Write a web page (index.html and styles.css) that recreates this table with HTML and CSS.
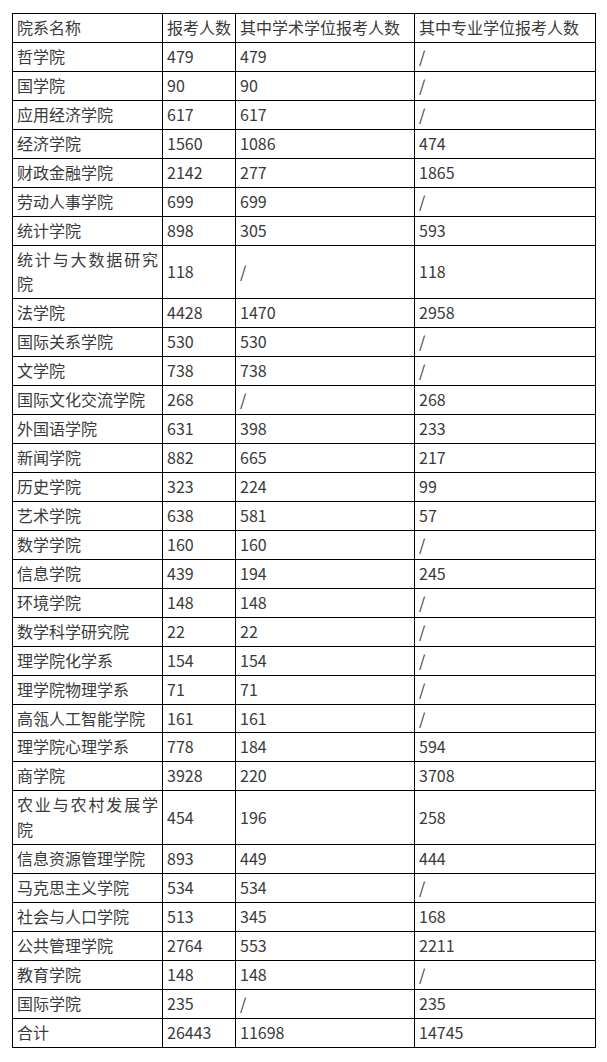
FILE: index.html
```html
<!DOCTYPE html>
<html lang="zh-CN">
<head>
<meta charset="utf-8">
<title>报考人数</title>
<link rel="stylesheet" href="styles.css">
</head>
<body>
<div class="page">
<table class="data">
<colgroup>
<col class="c1"><col class="c2"><col class="c3"><col class="c4">
</colgroup>
<tbody>
<tr><td>院系名称</td><td>报考人数</td><td>其中学术学位报考人数</td><td>其中专业学位报考人数</td></tr>
<tr><td>哲学院</td><td>479</td><td>479</td><td>/</td></tr>
<tr><td>国学院</td><td>90</td><td>90</td><td>/</td></tr>
<tr><td>应用经济学院</td><td>617</td><td>617</td><td>/</td></tr>
<tr><td>经济学院</td><td>1560</td><td>1086</td><td>474</td></tr>
<tr><td>财政金融学院</td><td>2142</td><td>277</td><td>1865</td></tr>
<tr><td>劳动人事学院</td><td>699</td><td>699</td><td>/</td></tr>
<tr><td>统计学院</td><td>898</td><td>305</td><td>593</td></tr>
<tr><td>统计与大数据研究院</td><td>118</td><td>/</td><td>118</td></tr>
<tr><td>法学院</td><td>4428</td><td>1470</td><td>2958</td></tr>
<tr><td>国际关系学院</td><td>530</td><td>530</td><td>/</td></tr>
<tr><td>文学院</td><td>738</td><td>738</td><td>/</td></tr>
<tr><td>国际文化交流学院</td><td>268</td><td>/</td><td>268</td></tr>
<tr><td>外国语学院</td><td>631</td><td>398</td><td>233</td></tr>
<tr><td>新闻学院</td><td>882</td><td>665</td><td>217</td></tr>
<tr><td>历史学院</td><td>323</td><td>224</td><td>99</td></tr>
<tr><td>艺术学院</td><td>638</td><td>581</td><td>57</td></tr>
<tr><td>数学学院</td><td>160</td><td>160</td><td>/</td></tr>
<tr><td>信息学院</td><td>439</td><td>194</td><td>245</td></tr>
<tr><td>环境学院</td><td>148</td><td>148</td><td>/</td></tr>
<tr><td>数学科学研究院</td><td>22</td><td>22</td><td>/</td></tr>
<tr><td>理学院化学系</td><td>154</td><td>154</td><td>/</td></tr>
<tr><td>理学院物理学系</td><td>71</td><td>71</td><td>/</td></tr>
<tr><td>高瓴人工智能学院</td><td>161</td><td>161</td><td>/</td></tr>
<tr><td>理学院心理学系</td><td>778</td><td>184</td><td>594</td></tr>
<tr><td>商学院</td><td>3928</td><td>220</td><td>3708</td></tr>
<tr><td>农业与农村发展学院</td><td>454</td><td>196</td><td>258</td></tr>
<tr><td>信息资源管理学院</td><td>893</td><td>449</td><td>444</td></tr>
<tr><td>马克思主义学院</td><td>534</td><td>534</td><td>/</td></tr>
<tr><td>社会与人口学院</td><td>513</td><td>345</td><td>168</td></tr>
<tr><td>公共管理学院</td><td>2764</td><td>553</td><td>2211</td></tr>
<tr><td>教育学院</td><td>148</td><td>148</td><td>/</td></tr>
<tr><td>国际学院</td><td>235</td><td>/</td><td>235</td></tr>
<tr><td>合计</td><td>26443</td><td>11698</td><td>14745</td></tr>
</tbody>
</table>
</div>
</body>
</html>
```
FILE: styles.css
```css
html, body {
  margin: 0;
  padding: 0;
  background: #ffffff;
}
.page {
  padding: 13px 12px 0 12px;
  font-family: "Noto Sans CJK SC", "Microsoft YaHei", sans-serif;
  font-size: 16px;
  color: #3a3a3a;
}
.data {
  border-collapse: collapse;
  table-layout: fixed;
  width: 583px;
}
.c1 { width: 150px; }
.c2 { width: 73px; }
.c3 { width: 179px; }
.c4 { width: 181px; }
.data td {
  border: 1px solid #000000;
  padding: 1px 4px 2px 4px;
  line-height: 24.94px;
  text-align: justify;
  vertical-align: middle;
  word-break: break-all;
}
```
